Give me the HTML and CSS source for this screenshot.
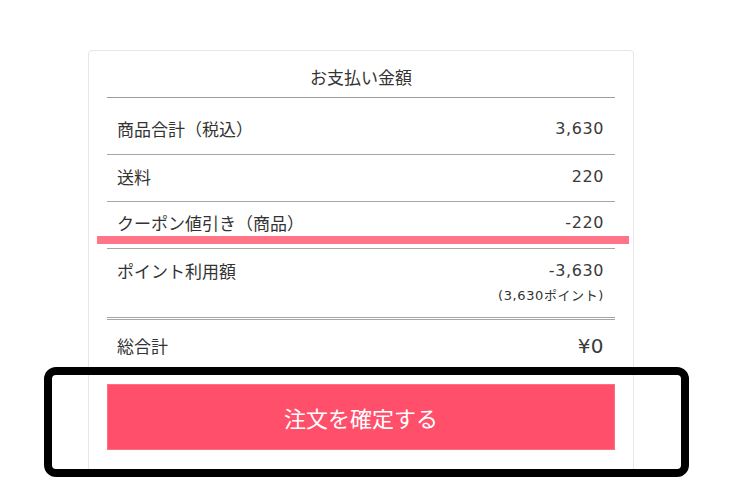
FILE: index.html
```html
<!DOCTYPE html>
<html lang="ja">
<head>
<meta charset="utf-8">
<link rel="stylesheet" href="styles.css">
</head>
<body>
<div class="page">
  <div class="card">
    <div class="head">お支払い金額</div>
    <div class="row first">
      <span class="label">商品合計（税込）</span>
      <span class="val">3,630</span>
    </div>
    <div class="row">
      <span class="label">送料</span>
      <span class="val">220</span>
    </div>
    <div class="row coupon">
      <span class="label">クーポン値引き（商品）</span>
      <span class="val">-220</span>
      <span class="mark"></span>
    </div>
    <div class="row points">
      <span class="label">ポイント利用額</span>
      <div class="valcol">
        <span class="val">-3,630</span>
        <span class="sub">(3,630ポイント)</span>
      </div>
    </div>
    <div class="row total">
      <span class="label">総合計</span>
      <span class="val big">¥0</span>
    </div>
    <button class="confirm">注文を確定する</button>
  </div>
  <div class="frame"></div>
</div>
</body>
</html>
```

FILE: styles.css
```css
html, body {
  margin: 0;
  background: #fff;
}
body {
  font-family: "DejaVu Sans", "Noto Sans CJK JP", sans-serif;
  color: #333;
}
.page {
  position: relative;
  width: 750px;
  height: 500px;
  padding: 50px 0 0 88px;
  box-sizing: border-box;
  overflow: hidden;
}
.card {
  width: 546px;
  box-sizing: border-box;
  border: 1px solid #e6e6e6;
  border-radius: 4px;
  padding: 0 18px 21px;
}
.head {
  font-family: "Noto Sans CJK JP", sans-serif;
  font-size: 17px;
  line-height: 24px;
  text-align: center;
  padding: 14px 0 8px;
  border-bottom: 1px solid #9c9c9c;
}
.row {
  display: flex;
  justify-content: space-between;
  align-items: flex-start;
  padding: 10px 11px 12px 10px;
  border-bottom: 1px solid #a6a6a6;
  font-size: 16px;
  line-height: 24px;
}
.row.first {
  padding-top: 19px;
  padding-bottom: 13px;
}
.label {
  font-family: "Noto Sans CJK JP", sans-serif;
  font-size: 17px;
}
.val {
  letter-spacing: 0.6px;
  color: #3a3a3a;
}
.coupon {
  position: relative;
  padding-top: 9px;
  padding-bottom: 13px;
}
.mark {
  position: absolute;
  left: -10px;
  right: -14px;
  bottom: 4px;
  height: 8px;
  background: #ff7486;
}
.points {
  padding-bottom: 9px;
  border-bottom: 3px double #a6a6a6;
}
.valcol {
  display: flex;
  flex-direction: column;
  align-items: flex-end;
}
.sub {
  font-size: 13px;
  line-height: 25px;
  letter-spacing: 0.6px;
}
.total {
  border-bottom: none;
  align-items: center;
  padding: 14px 11px 26px 10px;
}
.big {
  font-size: 20px;
  letter-spacing: 0.4px;
}
.confirm {
  display: block;
  width: 100%;
  height: 66px;
  border: 1px solid #ff6f82;
  background: #ff4f6a;
  color: #fff;
  font-family: "Noto Sans CJK JP", sans-serif;
  font-size: 22px;
  margin: 0;
  padding: 0;
}
.frame {
  position: absolute;
  left: 44px;
  top: 367px;
  width: 645px;
  height: 110px;
  box-sizing: border-box;
  border: 8px solid #000;
  border-radius: 12px;
}
```
